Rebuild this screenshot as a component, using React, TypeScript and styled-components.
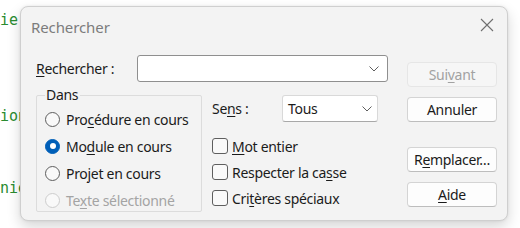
import React from 'react';
import styled, { createGlobalStyle } from 'styled-components';

const GlobalStyle = createGlobalStyle`
  html, body { margin: 0; padding: 0; background: #ffffff; }
  body { font-family: "Noto Sans", "Open Sans", sans-serif; }
  * { box-sizing: border-box; }
`;

const Page = styled.div`
  position: relative;
  width: 520px;
  height: 228px;
  overflow: hidden;
  background: #ffffff;
`;

const Code = styled.pre`
  margin: 0;
  padding: 8px 0 0 0;
  font-family: "DejaVu Sans Mono", "Liberation Mono", monospace;
  font-size: 15px;
  line-height: 24px;
  color: #2a8c31;
`;

const Dialog = styled.div`
  position: absolute;
  left: 20px;
  top: 6px;
  width: 488px;
  height: 215px;
  border: 1px solid #cfcfcf;
  border-radius: 8px;
  background: #f3f3f3;
  box-shadow: 0 6px 14px rgba(0, 0, 0, 0.16), 0 0 3px rgba(0, 0, 0, 0.08);
  display: flex;
  flex-direction: column;
  color: #1b1b1b;
  font-size: 14px;
  letter-spacing: -0.3px;
`;

const TitleBar = styled.div`
  height: 40px;
  display: flex;
  align-items: center;
  padding: 0 13px 0 10px;
`;

const Title = styled.div`
  flex: 1;
  font-size: 15px;
  letter-spacing: -0.1px;
  color: #7c7c7c;
`;

const CloseButton = styled.div`
  width: 14px;
  height: 14px;
  margin-bottom: 4px;
  display: flex;
`;

const Body = styled.div`
  display: flex;
  padding: 8px 10px 0 15px;
`;

const LeftCol = styled.div`
  display: flex;
  flex-direction: column;
  width: 352px;
`;

const SearchRow = styled.div`
  display: flex;
  align-items: center;
  height: 27px;
`;

const Label = styled.label<{ $w: number }>`
  width: ${(p) => p.$w}px;
  line-height: 18px;
`;

const Combo = styled.div<{ $w: number; $pr: number }>`
  width: ${(p) => p.$w}px;
  height: 27px;
  background: #ffffff;
  border: 1px solid #8f8f8f;
  border-radius: 3px;
  display: flex;
  align-items: center;
  padding: 0 ${(p) => p.$pr}px 0 5px;
`;

const SelectBox = styled(Combo)`
  border-color: #d9d9d9;
  border-bottom-color: #a8a8a8;
`;

const ComboText = styled.span`
  flex: 1;
  line-height: 18px;
`;

const LowerRow = styled.div`
  display: flex;
  margin-top: 5px;
`;

const GroupBox = styled.fieldset`
  width: 166px;
  height: 125px;
  margin: 0;
  padding: 0 8px 3px 8px;
  border: 1px solid #dcdcdc;
  border-radius: 2px;
  min-width: 0;
`;

const Legend = styled.legend`
  padding: 0 2px 0 1px;
  line-height: 16px;
`;

const RadioList = styled.div`
  display: flex;
  flex-direction: column;
  gap: 11px;
  margin-top: 8px;
`;

const OptionRow = styled.div<{ $disabled?: boolean }>`
  display: flex;
  align-items: center;
  height: 16px;
  white-space: nowrap;
  color: ${(p) => (p.$disabled ? '#a4a4a4' : '#1b1b1b')};
`;

const Radio = styled.span<{ $checked?: boolean; $disabled?: boolean }>`
  width: 15px;
  height: 15px;
  border-radius: 50%;
  margin-right: 6px;
  flex: none;
  display: flex;
  align-items: center;
  justify-content: center;
  border: 1px solid ${(p) => (p.$checked ? '#005fb8' : p.$disabled ? '#cdcdcd' : '#5e5e5e')};
  background: ${(p) => (p.$checked ? '#005fb8' : '#f9f9f9')};
  &::after {
    content: '';
    display: ${(p) => (p.$checked ? 'block' : 'none')};
    width: 6px;
    height: 6px;
    border-radius: 50%;
    background: #ffffff;
  }
`;

const Checkbox = styled.span`
  width: 16px;
  height: 16px;
  border-radius: 3px;
  border: 1px solid #5e5e5e;
  background: #f9f9f9;
  margin-right: 4px;
  flex: none;
`;

const OptionsCol = styled.div`
  display: flex;
  flex-direction: column;
  margin-left: 10px;
  padding-top: 8px;
`;

const CheckList = styled.div`
  display: flex;
  flex-direction: column;
  gap: 10px;
  margin-top: 16px;
`;

const ButtonCol = styled.div`
  display: flex;
  flex-direction: column;
  margin-left: auto;
  padding-top: 7px;
  width: 90px;
`;

const Button = styled.button<{ $gap: number }>`
  width: 90px;
  height: 25px;
  margin-top: ${(p) => p.$gap}px;
  padding: 0;
  border: 1px solid #d4d4d4;
  border-bottom-color: #bdbdbd;
  border-radius: 4px;
  background: #fdfdfd;
  color: #1b1b1b;
  font-family: "Noto Sans", "Open Sans", sans-serif;
  font-size: 14px;
  letter-spacing: -0.3px;
  line-height: 18px;
  &:disabled {
    background: #f6f6f6;
    border-color: #e6e6e6;
    color: #a2a2a2;
  }
`;

const Key = styled.u`
  text-decoration-thickness: 1px;
  text-underline-offset: 2px;
`;

const Chevron = () => (
  <svg width="10" height="6" viewBox="0 0 10 6">
    <polyline points="0.5,0.5 5,5 9.5,0.5" fill="none" stroke="#5f5f5f" strokeWidth="1" />
  </svg>
);

const CloseIcon = () => (
  <svg width="14" height="14" viewBox="0 0 14 14">
    <path d="M1 1 L13 13 M13 1 L1 13" stroke="#6f6f6f" strokeWidth="1.1" fill="none" />
  </svg>
);

export default function App() {
  return (
    <>
      <GlobalStyle />
      <Page>
        <Code>{'ier\n\n\n\nion\n\n\nnie'}</Code>
        <Dialog>
          <TitleBar>
            <Title>Rechercher</Title>
            <CloseButton>
              <CloseIcon />
            </CloseButton>
          </TitleBar>
          <Body>
            <LeftCol>
              <SearchRow>
                <Label $w={101}>
                  <Key>R</Key>echercher :
                </Label>
                <Combo $w={251} $pr={8}>
                  <ComboText />
                  <Chevron />
                </Combo>
              </SearchRow>
              <LowerRow>
                <GroupBox>
                  <Legend>Dans</Legend>
                  <RadioList>
                    <OptionRow>
                      <Radio />
                      <span>
                        Pro<Key>c</Key>édure en cours
                      </span>
                    </OptionRow>
                    <OptionRow>
                      <Radio $checked />
                      <span>
                        Mo<Key>d</Key>ule en cours
                      </span>
                    </OptionRow>
                    <OptionRow>
                      <Radio />
                      <span>
                        Pro<Key>j</Key>et en cours
                      </span>
                    </OptionRow>
                    <OptionRow $disabled>
                      <Radio $disabled />
                      <span>
                        Te<Key>x</Key>te sélectionné
                      </span>
                    </OptionRow>
                  </RadioList>
                </GroupBox>
                <OptionsCol>
                  <SearchRow>
                    <Label $w={70}>
                      Se<Key>n</Key>s :
                    </Label>
                    <SelectBox $w={96} $pr={5}>
                      <ComboText>Tous</ComboText>
                      <Chevron />
                    </SelectBox>
                  </SearchRow>
                  <CheckList>
                    <OptionRow>
                      <Checkbox />
                      <span>
                        <Key>M</Key>ot entier
                      </span>
                    </OptionRow>
                    <OptionRow>
                      <Checkbox />
                      <span>
                        Respecter la ca<Key>s</Key>se
                      </span>
                    </OptionRow>
                    <OptionRow>
                      <Checkbox />
                      <span>
                        Cri<Key>t</Key>ères spéciaux
                      </span>
                    </OptionRow>
                  </CheckList>
                </OptionsCol>
              </LowerRow>
            </LeftCol>
            <ButtonCol>
              <Button $gap={0} disabled>
                Sui<Key>v</Key>ant
              </Button>
              <Button $gap={10}>Annuler</Button>
              <Button $gap={25}>
                R<Key>e</Key>mplacer…
              </Button>
              <Button $gap={10}>
                <Key>A</Key>ide
              </Button>
            </ButtonCol>
          </Body>
        </Dialog>
      </Page>
    </>
  );
}
